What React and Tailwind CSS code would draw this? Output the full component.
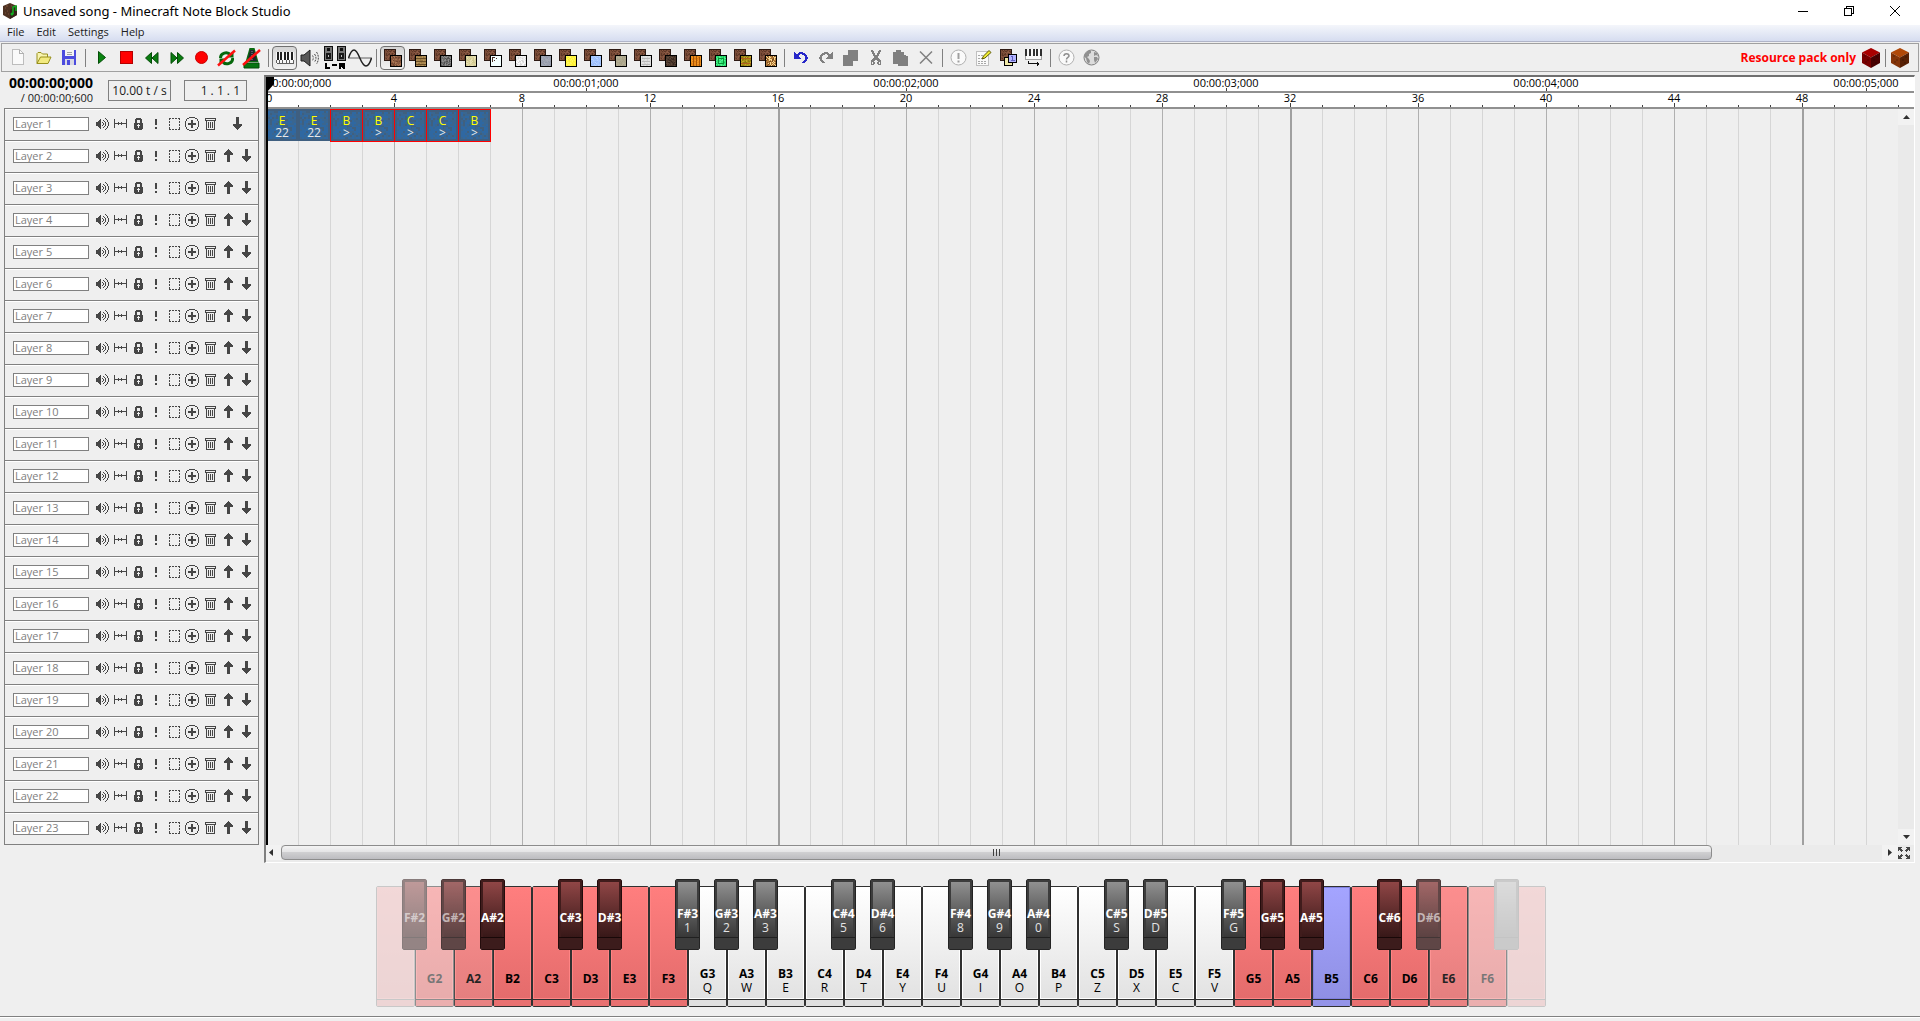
import React from "react";

/* ---------- pixel drawing helpers ---------- */

const PALETTE = {
  "#": "#464646",
  d: "#808080",
  B: "#2828c8",
};

function Pixels({ rows }) {
  const paths = {};
  rows.forEach((row, y) => {
    [...row].forEach((c, x) => {
      if (PALETTE[c]) paths[c] = (paths[c] || "") + `M${x} ${y}h1v1h-1z`;
    });
  });
  const w = Math.max(...rows.map((r) => r.length));
  return (
    <svg width={w} height={rows.length} viewBox={`0 0 ${w} ${rows.length}`} shapeRendering="crispEdges" aria-hidden="true">
      {Object.entries(paths).map(([c, d]) => (
        <path key={c} d={d} fill={PALETTE[c]} />
      ))}
    </svg>
  );
}

function noise(x, y, seed) {
  const n = Math.sin(x * 12.9898 + y * 78.233 + seed * 37.719) * 43758.5453;
  return n - Math.floor(n);
}

function Svg({ w, h, children, crisp }) {
  return (
    <svg width={w} height={h} viewBox={`0 0 ${w} ${h}`} shapeRendering={crisp ? "crispEdges" : "auto"} fill="none" aria-hidden="true">
      {children}
    </svg>
  );
}

/* ---------- layer icons ---------- */

const SPEAKER = [
  ".........#...",
  "....#.....#..",
  "...##..#...#.",
  "..###...#..#.",
  "#####.#..#..#",
  "#####..#.#..#",
  "#####..#.#..#",
  "#####.#..#..#",
  "..###...#..#.",
  "...##..#...#.",
  "....#.....#..",
  ".........#...",
];
const SPAN = [
  "#...........#",
  "#...........#",
  "#...........#",
  "#...#..#....#",
  "#############",
  "#...#..#....#",
  "#...........#",
  "#...........#",
  "#...........#",
];
const LOCK = [
  "..#####..",
  ".#######.",
  ".##...##.",
  ".##...##.",
  ".##...##.",
  "#########",
  "####.####",
  "###...###",
  "####.####",
  "####.####",
  "#########",
  ".#######.",
];
const BANG = ["##", "##", "##", "##", "##", "##", "..", "..", "##", "##"];
const DASHED = [
  "##.##.##.##",
  "#.........#",
  "...........",
  "#.........#",
  "#.........#",
  "...........",
  "#.........#",
  "#.........#",
  "...........",
  "#.........#",
  "#.........#",
  "##.##.##.##",
];
const PLUS = [
  "....######....",
  "..##......##..",
  ".#..........#.",
  ".#....##....#.",
  "#.....##.....#",
  "#.....##.....#",
  "#..########..#",
  "#..########..#",
  "#.....##.....#",
  "#.....##.....#",
  ".#....##....#.",
  ".#..........#.",
  "..##......##..",
  "....######....",
];
const TRASH = [
  "###########",
  "#.........#",
  "###########",
  ".#.......#.",
  ".#.#.#.#.#.",
  ".#.#.#.#.#.",
  ".#.#.#.#.#.",
  ".#.#.#.#.#.",
  ".#.#.#.#.#.",
  ".#.#.#.#.#.",
  ".#.......#.",
  ".#########.",
];
const UP = [
  "....#....",
  "...###...",
  "..#####..",
  ".#######.",
  "#########",
  "#########",
  "...###...",
  "...###...",
  "...###...",
  "...###...",
  "...###...",
  "...###...",
  "...###...",
];
const DOWN = [...UP].reverse();
const EXPAND = [
  "####....####",
  "###......###",
  "####....####",
  "#.###..###.#",
  "...#....#...",
  "............",
  "............",
  "...#....#...",
  "#.###..###.#",
  "####....####",
  "###......###",
  "####....####",
];

/* ---------- toolbar icons ---------- */

const NewIcon = () => (
  <Svg w={13} h={17} crisp>
    <path d="M0.5 0.5h7l4 4v11h-11z" fill="#fafafa" stroke="#bdbdbd" />
    <path d="M7.5 0.5v4h4" stroke="#b0b0b0" />
  </Svg>
);
const OpenIcon = () => (
  <Svg w={16} h={14}>
    <path d="M1 12.5V2.5l1-1h3l1.5 1.5h5v3" fill="#f8f4b0" stroke="#98901c" />
    <path d="M1 12.5l3.5-6.5h10.5l-3 6.5z" fill="#f2ea80" stroke="#98901c" />
  </Svg>
);
const SaveIcon = () => (
  <Svg w={14} h={15} crisp>
    <rect width="14" height="15" fill="#4c4cde" />
    <rect x="3" width="9" height="6" fill="#f4f4f4" />
    <path d="M5 2h5M5 4h5" stroke="#a0a0a0" />
    <rect x="3" y="9" width="9" height="6" fill="#d8d8e4" />
    <rect x="5" y="10" width="3" height="5" fill="#4c4cde" />
  </Svg>
);
const PlayIcon = () => (
  <Svg w={8} h={13}>
    <path d="M0.5 0.5l7 6-7 6z" fill="#0a8410" stroke="#044d08" />
  </Svg>
);
const StopIcon = () => (
  <Svg w={13} h={13} crisp>
    <rect x="0.5" y="0.5" width="12" height="12" fill="#ff0000" stroke="#b40000" />
  </Svg>
);
const RewindIcon = () => (
  <Svg w={14} h={12}>
    <path d="M6.5 0.5v11L0.5 6zM13 0.5v11L7 6z" fill="#0a7c10" stroke="#044d08" />
  </Svg>
);
const ForwardIcon = () => (
  <Svg w={14} h={12}>
    <path d="M1 0.5v11L7 6zM7.5 0.5v11L13.5 6z" fill="#0a7c10" stroke="#044d08" />
  </Svg>
);
const RecordIcon = () => (
  <Svg w={13} h={13}>
    <circle cx="6.5" cy="6.5" r="6" fill="#ff0000" stroke="#c80000" />
  </Svg>
);
const LoopIcon = () => (
  <Svg w={19} h={18}>
    <path d="M3.5 9a5.5 5 0 0 1 10-3M15.5 9a5.5 5 0 0 1-10 3.5" stroke="#06680c" strokeWidth="3" />
    <path d="M16.5 2v6.5h-6.5zM2.5 16V9.5h6z" fill="#06680c" />
    <path d="M1 16.5L18 1.5" stroke="#ff1010" strokeWidth="2.5" />
  </Svg>
);
const MetronomeIcon = () => (
  <Svg w={19} h={22}>
    <path d="M7.5 1h5l4 14h-13z" fill="#0a6a10" />
    <path d="M8 3h4l3 11H5.5z" fill="#20262a" />
    <path d="M10 4v9" stroke="#8c989c" strokeDasharray="1 1" />
    <path d="M2 16h15v5H2z" fill="#067410" stroke="#044d08" />
    <path d="M1 18L18 3" stroke="#ff1010" strokeWidth="2.5" />
  </Svg>
);
const KeyboardIcon = () => (
  <Svg w={18} h={12} crisp>
    <rect width="18" height="12" fill="#f8f8f8" />
    <path d="M2 0v8M5 0v8M9 0v8M12 0v8M16 0v8" stroke="#202020" strokeWidth="2" />
    <path d="M0.5 11h17M0.5 8v3M3.5 8v3M6.5 8v3M10.5 8v3M13.5 8v3M17.5 8v3" stroke="#606060" />
  </Svg>
);
const VolumeIcon = () => (
  <Svg w={19} h={18}>
    <path d="M1 6h3l6-5v16l-6-5H1z" fill="#585858" stroke="#202020" />
    <path d="M12.5 6.5c1 1.5 1 3.5 0 5M14.5 5c2 2.5 2 5.5 0 8M16.5 3c2.5 3.5 2.5 8.5 0 12" stroke="#484848" strokeDasharray="2 1" />
  </Svg>
);
const StereoIcon = () => (
  <Svg w={24} h={24} crisp>
    {[1, 14].map((x) => (
      <g key={x}>
        <rect x={x + 0.5} y="0.5" width="8" height="14" fill="#787878" stroke="#101010" />
        <rect x={x + 3} y="2" width="3" height="3" fill="#101010" />
        <rect x={x + 2} y="7" width="5" height="6" fill="#181818" />
        <rect x={x + 4} y="9" width="1" height="2" fill="#c0c0c0" />
      </g>
    ))}
    <path d="M3 17v5h4M9 19h5M17 23v-5h4v2h-3M19 20l3 3" stroke="#000" strokeWidth="2" />
  </Svg>
);
const WaveIcon = () => (
  <Svg w={24} h={18}>
    <path d="M0 9h24" stroke="#606060" />
    <path d="M0.5 9C2.5 3 4 1 6 1c5 0 6.5 16 12 16 2.5 0 4-3 5.5-8" stroke="#202020" strokeWidth="1.5" />
  </Svg>
);

const BLOCKS = [
  { name: "Harp", c: ["#8a5a40", "#6f4530", "#a87452"] },
  { name: "Double Bass", c: ["#a8864e", "#967440", "#b4925a"], kind: "planks" },
  { name: "Bass Drum", c: ["#6c6c6c", "#8c8c8c", "#505050"] },
  { name: "Snare Drum", c: ["#dcd4a0", "#d0c890", "#e8e0b4"] },
  { name: "Click", c: ["#f4ffff", "#f4ffff", "#f4ffff"], kind: "glass" },
  { name: "Guitar", c: ["#ececec", "#d8d8d8", "#fafafa"] },
  { name: "Flute", c: ["#9ca2b0", "#949aaa", "#a4aab6"] },
  { name: "Bell", c: ["#fff440", "#fcee30", "#fff860"] },
  { name: "Chime", c: ["#a8c8ff", "#9cbefc", "#b8d4ff"] },
  { name: "Xylophone", c: ["#b0aa90", "#a8a288", "#b8b298"] },
  { name: "Iron Xylophone", c: ["#dedede", "#d0d0d0", "#e4e4e4"], kind: "bars" },
  { name: "Cow Bell", c: ["#4c382c", "#382820", "#5c483a"] },
  { name: "Didgeridoo", c: ["#e88818", "#dc7c10", "#f09828"], kind: "pumpkin" },
  { name: "Bit", c: ["#2ce070", "#18c858", "#50f090"], kind: "gem" },
  { name: "Banjo", c: ["#a89018", "#8c7810", "#c0a828"], kind: "hay" },
  { name: "Pling", c: ["#b07838", "#f8d890", "#7c4c20"] },
];

function Texture({ c, seed, x, y, size }) {
  const cells = [];
  for (let i = 0; i < size; i++)
    for (let j = 0; j < size; j++) {
      const n = noise(i, j, seed);
      cells.push(<rect key={i + "-" + j} x={x + i} y={y + j} width="1" height="1" fill={n < 0.5 ? c[0] : n < 0.78 ? c[1] : c[2]} />);
    }
  return <g>{cells}</g>;
}

function BlockIcon({ block, seed }) {
  return (
    <Svg w={18} h={18} crisp>
      <rect width="12" height="12" fill="#2e1a14" />
      <Texture c={["#7a4c38", "#5c3626", "#8c5a44"]} seed={3} x={1} y={1} size={10} />
      <rect x="6" y="6" width="12" height="12" fill="#000" />
      <Texture c={block.c} seed={seed} x={7} y={7} size={10} />
      {block.kind === "planks" && <path d="M7 9.5h10M7 12.5h10M7 15.5h10" stroke="#6c5028" />}
      {block.kind === "bars" && <path d="M8 9.5h8M8 12.5h8M8 15.5h8" stroke="#b8b8b8" />}
      {block.kind === "pumpkin" && <path d="M9.5 7v10M12.5 7v10M15.5 8v9" stroke="#a85408" />}
      {block.kind === "hay" && <path d="M7 9.5h10M7 14.5h10" stroke="#b06020" />}
      {block.kind === "gem" && <path d="M9.5 9.5h5v5h-5z" stroke="#089838" />}
      {block.kind === "glass" && <path d="M8 12.5v-4h3M10 11.5h1M12 9.5h1" stroke="#4c3028" />}
    </Svg>
  );
}

const UNDO = [
  "B....BBBB.....",
  "BB..BBBBBBB...",
  "BBBBBB..BBBB..",
  "BBBBB.....BBB.",
  "BBBBB......BB.",
  "BBBBBB.....BBB",
  "BBBBBBB....BBB",
  "...........BB.",
  "..........BBB.",
  ".........BBB..",
  "........BBB...",
];
const REDO = UNDO.map((r) => [...r].reverse().join("").replace(/B/g, "d"));
const CUT = [
  ".dd......dd.",
  ".ddd....ddd.",
  "..dd....dd..",
  "..ddd..ddd..",
  "...dd..dd...",
  "...dddddd...",
  "....dddd....",
  "....dddd....",
  "...dddddd...",
  "..dddddddd..",
  ".dddd..dddd.",
  ".ddd....ddd.",
  ".d.dd..dd.d.",
  ".d.dd..dd.d.",
  ".ddd....ddd.",
];
const CopyIcon = () => (
  <Svg w={15} h={16} crisp>
    <path d="M5 0h10v11H10v5H0V5h5z" fill="#808080" />
  </Svg>
);
const PasteIcon = () => (
  <Svg w={15} h={16} crisp>
    <path d="M0 2h3V0h5v2h3v3h2v1h2v10H5v-2H0z" fill="#808080" />
  </Svg>
);
const DeleteIcon = () => (
  <Svg w={14} h={13}>
    <path d="M1 0.5l12 12M13 0.5l-12 12" stroke="#808080" strokeWidth="1.5" />
  </Svg>
);
const InfoIcon = () => (
  <Svg w={17} h={17}>
    <circle cx="8.5" cy="8.5" r="7.5" fill="#fafafa" stroke="#b0b0b0" />
    <path d="M8.5 4v6M8.5 11.5v2" stroke="#a0a0a0" strokeWidth="2" />
  </Svg>
);
const NotesIcon = () => (
  <Svg w={16} h={17}>
    <rect x="0.5" y="2.5" width="12" height="14" fill="#fafafa" stroke="#c0c0c0" />
    <path d="M2 6.5h6M2 9.5h5M2 12.5h8M2 14.5h8" stroke="#a8a8a8" strokeDasharray="2 1" />
    <path d="M6 10l1.5-3L13 1.5l2 2L9 9z" fill="#f0ec30" stroke="#5c5808" />
  </Svg>
);
const InstrumentsIcon = () => (
  <Svg w={17} h={18} crisp>
    <rect width="12" height="12" fill="#2e1a14" />
    <Texture c={["#7a4c38", "#5c3626", "#8c5a44"]} seed={3} x={1} y={1} size={10} />
    <rect x="4.5" y="8.5" width="8" height="8" fill="#f0e8a8" stroke="#000" />
    <rect x="8.5" y="5.5" width="8" height="8" fill="#b4b4ff" stroke="#000" />
    <path d="M11 7.5h2M12.5 7v4M11 11.5h4" stroke="#6060c0" />
  </Svg>
);
const MidiIcon = () => (
  <Svg w={17} h={17} crisp>
    <rect width="17" height="11" fill="#f8f8f8" />
    <path d="M1 0v7M5 0v7M9 0v7M12 0v7M16 0v7" stroke="#303030" strokeWidth="2" />
    <path d="M0.5 7v3.5h16V7" stroke="#a0a0a0" />
    <path d="M3.5 12v2.5h10M12 12.5v4M13.5 13.5v2" stroke="#101010" />
  </Svg>
);
const HelpIcon = () => (
  <Svg w={17} h={17}>
    <circle cx="8.5" cy="8.5" r="7.5" fill="#fafafa" stroke="#b0b0b0" />
    <path d="M6 7c0-3 5-3 5 0 0 1.5-2.5 1.5-2.5 3.5M8.5 11.5v2" stroke="#909090" strokeWidth="1.5" />
  </Svg>
);
const GlobeIcon = () => (
  <Svg w={17} h={17}>
    <circle cx="8.5" cy="8.5" r="7.5" fill="#dcdcdc" stroke="#808080" />
    <path d="M2 5l3-3 3 0 0 2-2 1 0 2-2 1 2 2 1 2-1 3-2-2-1-4-2-1z" fill="#909090" />
    <path d="M11 3l3 1 1 3-2-1-2 1zM11 8h3l1 2-3 4-1-3z" fill="#909090" />
  </Svg>
);
function CubeIcon({ top, left, right }) {
  return (
    <Svg w={18} h={20}>
      <path d="M9 0l9 4.5-9 5-9-5z" fill={top} />
      <path d="M0 4.5l9 5V20l-9-5z" fill={left} />
      <path d="M18 4.5l-9 5V20l9-5z" fill={right} />
      <path d="M2 8h2M5 12h2M3 14h2M11 12h2M14 9h2M13 15h2" stroke="#000" opacity="0.3" />
    </Svg>
  );
}
const AppIcon = () => (
  <Svg w={14} h={16}>
    <path d="M7 0l7 3v9l-7 4-7-4V3z" fill="#4e3222" />
    <path d="M7 7l7-4v9l-7 4z" fill="#36221a" />
    <path d="M2 5h1M4 8h1M2 10h1M5 11h1M3 3h2M8 3h1" stroke="#7c5238" />
    <path d="M10 11V4l3-1v5" stroke="#10b020" strokeWidth="1.5" />
    <circle cx="9" cy="11" r="1.5" fill="#10b020" />
  </Svg>
);

/* ---------- toolbar ---------- */

function ToolButton({ label, active, children }) {
  return (
    <button
      type="button"
      aria-label={label}
      className={
        active
          ? "flex h-6 w-[25px] shrink-0 items-center justify-center overflow-hidden rounded border border-[#707070] bg-gradient-to-b from-[#d4d4d4] to-[#f2f2f2]"
          : "flex h-6 w-[25px] shrink-0 items-center justify-center"
      }
    >
      {children}
    </button>
  );
}

const Separator = () => (
  <div className="flex w-2 shrink-0 justify-center">
    <div className="h-[18px] w-px bg-[#808080]" />
  </div>
);

function Toolbar() {
  return (
    <div className="mx-px mt-px flex h-[29px] items-center border border-[#a0a0a0] pr-2 pl-1" role="toolbar">
      <ToolButton label="New song"><NewIcon /></ToolButton>
      <ToolButton label="Open song"><OpenIcon /></ToolButton>
      <ToolButton label="Save song"><SaveIcon /></ToolButton>
      <Separator />
      <ToolButton label="Play"><PlayIcon /></ToolButton>
      <ToolButton label="Stop"><StopIcon /></ToolButton>
      <ToolButton label="Rewind"><RewindIcon /></ToolButton>
      <ToolButton label="Fast forward"><ForwardIcon /></ToolButton>
      <ToolButton label="Record"><RecordIcon /></ToolButton>
      <ToolButton label="Loop"><LoopIcon /></ToolButton>
      <ToolButton label="Metronome"><MetronomeIcon /></ToolButton>
      <Separator />
      <ToolButton label="Edit keys" active><KeyboardIcon /></ToolButton>
      <ToolButton label="Edit velocities"><VolumeIcon /></ToolButton>
      <ToolButton label="Edit panning"><StereoIcon /></ToolButton>
      <ToolButton label="Edit pitches"><WaveIcon /></ToolButton>
      <Separator />
      {BLOCKS.map((b, i) => (
        <ToolButton key={b.name} label={b.name} active={i === 0}>
          <BlockIcon block={b} seed={i + 1} />
        </ToolButton>
      ))}
      <Separator />
      <ToolButton label="Undo"><Pixels rows={UNDO} /></ToolButton>
      <ToolButton label="Redo"><Pixels rows={REDO} /></ToolButton>
      <ToolButton label="Copy"><CopyIcon /></ToolButton>
      <ToolButton label="Cut"><Pixels rows={CUT} /></ToolButton>
      <ToolButton label="Paste"><PasteIcon /></ToolButton>
      <ToolButton label="Delete"><DeleteIcon /></ToolButton>
      <Separator />
      <ToolButton label="Song info"><InfoIcon /></ToolButton>
      <ToolButton label="Song properties"><NotesIcon /></ToolButton>
      <ToolButton label="Instrument settings"><InstrumentsIcon /></ToolButton>
      <ToolButton label="MIDI devices"><MidiIcon /></ToolButton>
      <Separator />
      <ToolButton label="Help"><HelpIcon /></ToolButton>
      <ToolButton label="Website"><GlobeIcon /></ToolButton>
      <span className="ml-auto text-xs font-bold text-[#ff0000]">Resource pack only</span>
      <button type="button" aria-label="Resource pack mode" className="ml-1.5">
        <CubeIcon top="#a80000" left="#780000" right="#480000" />
      </button>
      <div className="mx-[5px] h-[18px] w-px bg-[#808080]" />
      <button type="button" aria-label="Data pack mode" className="mr-px">
        <CubeIcon top="#b04808" left="#843408" right="#582004" />
      </button>
    </div>
  );
}

/* ---------- layers ---------- */

const LAYERS = Array.from({ length: 23 }, (_, i) => `Layer ${i + 1}`);

function LayerButton({ label, rows, wide }) {
  return (
    <button type="button" aria-label={label} className={wide ? "flex h-5 w-9 items-center justify-center" : "flex h-5 w-[18px] items-center justify-center"}>
      <Pixels rows={rows} />
    </button>
  );
}

function LayerRow({ name, first }) {
  return (
    <li className="flex h-8 items-center border-b border-[#808080] pb-0.5 pl-2 shadow-[inset_0_1px_0_#ffffff]">
      <input
        aria-label={`${name} name`}
        placeholder={name}
        className="mr-1 h-3.5 w-[76px] border border-[#808080] bg-white px-px text-[11px] leading-3 placeholder:text-[#808080]"
      />
      <LayerButton label="Volume" rows={SPEAKER} />
      <LayerButton label="Stereo" rows={SPAN} />
      <LayerButton label="Lock" rows={LOCK} />
      <LayerButton label="Solo" rows={BANG} />
      <LayerButton label="Select all" rows={DASHED} />
      <LayerButton label="Add layer" rows={PLUS} />
      <LayerButton label="Delete layer" rows={TRASH} />
      {first ? (
        <LayerButton label="Move down" rows={DOWN} wide />
      ) : (
        <>
          <LayerButton label="Move up" rows={UP} />
          <LayerButton label="Move down" rows={DOWN} />
        </>
      )}
    </li>
  );
}

function LayerPanel() {
  return (
    <div className="w-[264px] shrink-0">
      <div className="flex h-[33px]">
        <div className="w-[93px] text-right">
          <div className="text-sm leading-[15px] font-bold text-black">00:00:00;000</div>
          <div className="text-[11px] leading-[15px]">/ 00:00:00;600</div>
        </div>
        <button type="button" className="mt-[5px] ml-[15px] h-[21px] w-[63px] border border-[#808080] text-xs">
          10.00 t / s
        </button>
        <div className="mt-[5px] ml-[13px] h-[21px] w-[63px] border border-[#808080] pr-1.5 text-right text-xs leading-5">1 . 1 . 1</div>
      </div>
      <ul className="mr-[5px] ml-1 border-x border-t border-[#808080]">
        {LAYERS.map((name, i) => (
          <LayerRow key={name} name={name} first={i === 0} />
        ))}
      </ul>
    </div>
  );
}

/* ---------- timeline ---------- */

const NOTES = [
  { key: "E", value: "22" },
  { key: "E", value: "22" },
  { key: "B", value: ">", selected: true },
  { key: "B", value: ">", selected: true },
  { key: "C", value: ">", selected: true },
  { key: "C", value: ">", selected: true },
  { key: "B", value: ">", selected: true },
];

function NoteTexture() {
  const cells = [];
  for (let i = 0; i < 16; i++)
    for (let j = 0; j < 16; j++) {
      const edge = i === 0 || j === 0 || i === 15 || j === 15;
      const n = noise(i, j, 11);
      if (edge || n < 0.55) cells.push(<rect key={i + "-" + j} x={i * 2} y={j * 2} width="2" height="2" fill={edge ? "#3f5f80" : n < 0.28 ? "#40607f" : "#3a6690"} />);
    }
  return (
    <svg viewBox="0 0 32 32" className="absolute inset-0 h-full w-full" shapeRendering="crispEdges" aria-hidden="true">
      {cells}
    </svg>
  );
}

function Note({ note }) {
  return (
    <div
      className={
        note.selected
          ? "relative -mr-px h-[33px] w-[33px] border border-[#ff0000] bg-[#2f68a2] text-center text-xs"
          : "relative h-8 w-8 bg-[#2f68a2] pt-px text-center text-xs"
      }
    >
      <NoteTexture />
      <div className="relative pt-1 leading-[13px] text-[#ffff00]">{note.key}</div>
      <div className="relative leading-3 text-[#e8e8e8]">{note.value}</div>
    </div>
  );
}

const SECONDS = [1, 2, 3, 4, 5];
const TICKS = Array.from({ length: 12 }, (_, i) => (i + 1) * 4);

function Timeline() {
  return (
    <div className="mr-[5px] min-w-0 flex-1 border-t-2 border-r border-b border-l-2 border-t-[#707070] border-r-white border-b-white border-l-[#808080]">
      <div className="relative">
        <div className="flex h-4 overflow-x-clip border-b-2 border-[#909090] bg-white bg-[linear-gradient(90deg,#404040_1px,transparent_1px)] bg-[length:320px_3px] bg-[position:0_bottom] bg-repeat-x text-[11px] leading-3 text-black">
          <div className="w-40 shrink-0">00:00:00;000</div>
          {SECONDS.map((s) => (
            <div key={s} className="w-80 shrink-0 text-center">{`00:00:0${s};000`}</div>
          ))}
        </div>
        <div className="flex h-4 overflow-x-clip border-b-2 border-[#909090] bg-white bg-[linear-gradient(90deg,#404040_1px,transparent_1px),linear-gradient(90deg,#404040_1px,transparent_1px)] bg-[length:128px_4px,32px_2px] bg-[position:0_bottom,0_bottom] bg-repeat-x text-[11px] leading-[10px] text-black">
          <div className="w-16 shrink-0">0</div>
          {TICKS.map((t) => (
            <div key={t} className="w-32 shrink-0 text-center">{t}</div>
          ))}
        </div>
        <div className="flex h-[736px]">
          <div className="flex min-w-0 flex-1 bg-[linear-gradient(90deg,#a0a0a0_2px,transparent_2px),linear-gradient(90deg,#b0b0b0_1px,transparent_1px),linear-gradient(90deg,#d6d6d6_1px,transparent_1px)] bg-[length:512px_100%,128px_100%,32px_100%]">
            {NOTES.map((n, i) => (
              <Note key={i} note={n} />
            ))}
          </div>
          <div className="flex w-4 flex-col justify-between bg-[#eaeaea]">
            <button type="button" aria-label="Scroll up" className="flex h-4 items-center justify-center bg-[#f2f2f2]">
              <Svg w={7} h={4}><path d="M0 4l3.5-4L7 4z" fill="#303030" /></Svg>
            </button>
            <button type="button" aria-label="Scroll down" className="flex h-4 items-center justify-center bg-[#f2f2f2]">
              <Svg w={7} h={4}><path d="M0 0l3.5 4L7 0z" fill="#303030" /></Svg>
            </button>
          </div>
        </div>
        <div className="pointer-events-none absolute top-0 left-0 h-full w-0.5 bg-black" />
        <div className="pointer-events-none absolute top-0 left-0">
          <Svg w={9} h={15}><path d="M0 0h8v7l-7 8H0z" fill="#000" /></Svg>
        </div>
      </div>
      <div className="flex h-[17px] bg-[#ebebeb]">
        <button type="button" aria-label="Scroll left" className="flex h-[15px] w-[15px] items-center justify-start bg-[#f2f2f2] pl-[3px]">
          <Svg w={4} h={7}><path d="M4 0L0 3.5 4 7z" fill="#303030" /></Svg>
        </button>
        <div className="flex-1">
          <div className="flex h-[15px] w-[89.4%] items-center justify-center gap-[2px] rounded-sm border border-[#8c8c8c] bg-[linear-gradient(#f4f4f4_0,#e2e2e4_50%,#cfcfd1_50%,#bcbcc0_100%)]">
            <div className="h-[7px] w-px bg-[#404040]" />
            <div className="h-[7px] w-px bg-[#404040]" />
            <div className="h-[7px] w-px bg-[#404040]" />
          </div>
        </div>
        <button type="button" aria-label="Scroll right" className="flex h-[15px] w-4 items-center justify-center bg-[#f2f2f2]">
          <Svg w={4} h={7}><path d="M0 0l4 3.5L0 7z" fill="#303030" /></Svg>
        </button>
        <button type="button" aria-label="Fit to window" className="flex h-4 w-4 items-center justify-start">
          <Pixels rows={EXPAND} />
        </button>
      </div>
    </div>
  );
}

/* ---------- piano ---------- */

const LETTERS = {
  G3: "Q", A3: "W", B3: "E", C4: "R", D4: "T", E4: "Y", F4: "U", G4: "I", A4: "O", B4: "P", C5: "Z", D5: "X", E5: "C", F5: "V",
  "F#3": "1", "G#3": "2", "A#3": "3", "C#4": "5", "D#4": "6", "F#4": "8", "G#4": "9", "A#4": "0", "C#5": "S", "D#5": "D", "F#5": "G",
};
const WHITES = "F2 G2 A2 B2 C3 D3 E3 F3 G3 A3 B3 C4 D4 E4 F4 G4 A4 B4 C5 D5 E5 F5 G5 A5 B5 C6 D6 E6 F6 G6".split(" ");
const FADE = {
  F2: "opacity-20", G2: "opacity-50", A2: "opacity-85", E6: "opacity-85", F6: "opacity-50", G6: "opacity-20",
  "F#2": "opacity-50", "G#2": "opacity-80", "D#6": "opacity-80", "F#6": "opacity-20",
};
const UNLABELLED = ["F2", "G6", "F#6"];

function WhiteKey({ name }) {
  const letter = LETTERS[name];
  const face =
    name === "B5"
      ? "border-[#8080e0] bg-gradient-to-b from-[#a4a4ff] to-[#9090e4]"
      : letter
        ? "border-white bg-gradient-to-b from-white to-[#e2e2e2]"
        : "border-[#ff8484] bg-gradient-to-b from-[#ff7e7e] to-[#e46c6c]";
  const foot = name === "B5" ? "bg-[#9494e8]" : letter ? "bg-[#e0e0e0]" : "bg-[#e87070]";
  return (
    <button
      type="button"
      aria-label={name}
      className={`flex h-[121px] w-full flex-col rounded-[2px] border border-[#303030] text-xs leading-[14px] text-black ${FADE[name] || ""}`}
    >
      <span className={`flex w-full flex-1 flex-col items-center justify-end border ${face} ${letter ? "pb-[3px]" : "pb-3"}`}>
        <span className="font-bold">{UNLABELLED.includes(name) ? "" : name}</span>
        {letter && <span>{letter}</span>}
      </span>
      <span className={`h-[7px] w-full border-t border-[#303030] ${foot}`} />
    </button>
  );
}

function BlackKey({ name }) {
  const letter = LETTERS[name];
  const gray = letter || name === "F#6";
  const face = gray ? "border-[#3c3c3c] bg-gradient-to-b from-[#909090] to-[#383838]" : "border-[#401c1c] bg-gradient-to-b from-[#904646] to-[#381818]";
  const foot = gray ? "border-[#202020] bg-[#3c3c3c]" : "border-[#180808] bg-[#3c1c1c]";
  const edge = gray ? "border-[#242424]" : "border-[#240c0c]";
  return (
    <button type="button" aria-label={name} className="absolute -top-[7px] -right-3 z-10 h-[71px] w-[25px] rounded-[2px] bg-[#efefef]">
      <span className={`flex h-full w-full flex-col rounded-[2px] border text-xs leading-[14px] ${FADE[name] ? "text-white/60" : "text-white"} ${edge} ${FADE[name] || ""}`}>
        <span className={`flex w-full flex-1 flex-col items-center justify-end border-2 border-b-0 ${face} ${letter ? "pb-0.5" : "pb-3"}`}>
          <span className="font-bold">{UNLABELLED.includes(name) ? "" : name}</span>
          {letter && <span className="text-[#e4e4e4]">{letter}</span>}
        </span>
        <span className={`h-3 w-full border-t ${foot}`} />
      </span>
    </button>
  );
}

function Piano() {
  return (
    <div className="mt-[23px] flex justify-center pl-0.5">
      {WHITES.map((name) => (
        <div key={name} className="relative w-[39px]">
          <WhiteKey name={name} />
          {"FGACD".includes(name[0]) && name !== "G6" && <BlackKey name={`${name[0]}#${name[1]}`} />}
        </div>
      ))}
    </div>
  );
}

/* ---------- window ---------- */

export default function App() {
  return (
    <div className="flex min-h-screen flex-col bg-[#efefef] font-['Open_Sans','Noto_Sans',sans-serif] text-[#202020]">
      <header className="flex h-[25px] items-center bg-white pr-0.5 pb-[3px] pl-[3px]">
        <AppIcon />
        <h1 className="ml-1.5 font-['Noto_Sans',sans-serif] text-[13px] leading-4 text-black">Unsaved song - Minecraft Note Block Studio</h1>
        <div className="ml-auto flex">
          <button type="button" aria-label="Minimize" className="flex h-5 w-[46px] items-center justify-center">
            <Svg w={10} h={10} crisp><path d="M0 5.5h10" stroke="#000" /></Svg>
          </button>
          <button type="button" aria-label="Restore" className="flex h-5 w-[46px] items-center justify-center">
            <Svg w={10} h={10} crisp><path d="M0.5 2.5h7v7h-7zM2.5 2.5v-2h7v7h-2" stroke="#000" /></Svg>
          </button>
          <button type="button" aria-label="Close" className="flex h-5 w-[46px] items-center justify-center">
            <Svg w={10} h={10}><path d="M0 0l10 10M10 0L0 10" stroke="#000" /></Svg>
          </button>
        </div>
      </header>
      <nav className="flex h-[17px] items-center gap-3 border-b border-[#b0b4c8] bg-gradient-to-b from-[#f4f6fb] to-[#d6ddf0] pb-0.5 pl-[7px] text-[11px] leading-[14px]">
        <button type="button">File</button>
        <button type="button">Edit</button>
        <button type="button">Settings</button>
        <button type="button">Help</button>
      </nav>
      <Toolbar />
      <main className="mt-[3px] flex items-start">
        <LayerPanel />
        <Timeline />
      </main>
      <Piano />
      <footer className="mt-[9px] flex-1 border-t border-[#808080] shadow-[inset_0_1px_0_#ffffff]" />
    </div>
  );
}
